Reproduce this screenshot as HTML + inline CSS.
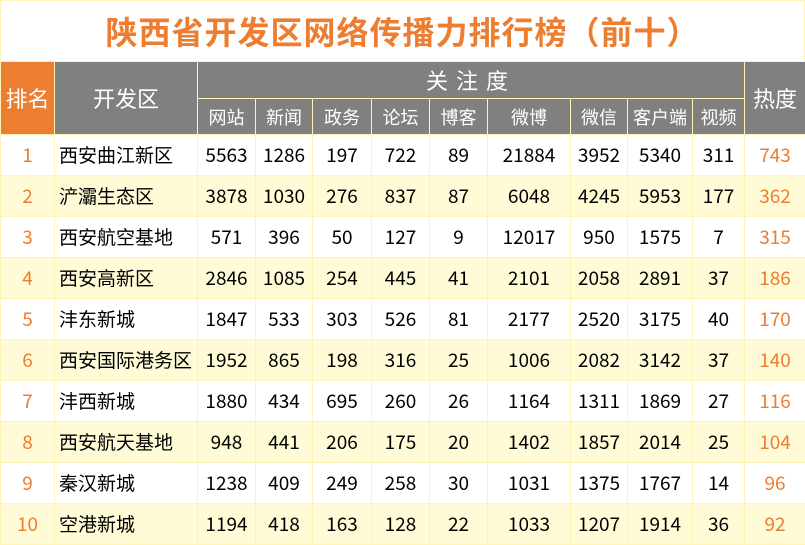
<!DOCTYPE html>
<html><head><meta charset="utf-8"><style>
body{margin:0;width:805px;height:545px;overflow:hidden;background:#fff;font-family:"Noto Sans CJK SC",sans-serif}
.t{position:absolute;left:0;top:0;width:803px;height:61px;border:1px solid #fff3b8;border-bottom:none;text-align:center;line-height:60px;font-size:32px;font-weight:bold;color:#ed7d31;letter-spacing:1px}
table{position:absolute;left:0;top:61px;border-collapse:collapse;table-layout:fixed;width:805px}
td{border:1px solid #fff3b8;text-align:center;padding:0;font-size:19px;color:#000;height:40px;line-height:22px}
.h td{background:#808080;color:#fff;font-size:18px;height:35px}
.h td.o{background:#ed7d31;font-size:22px}
.h td.big{font-size:22px}
tr.a td{background:#fffbd6}
td.r{color:#ed7d31}
td.n{text-align:left;padding-left:4px}
</style></head><body>
<div class="t">陕西省开发区网络传播力排行榜（前十）</div>
<table>
<colgroup><col style="width:54px"><col style="width:143px"><col style="width:58px"><col style="width:57px"><col style="width:59px"><col style="width:58px"><col style="width:58px"><col style="width:83px"><col style="width:57px"><col style="width:65px"><col style="width:52px"><col style="width:61px"></colgroup>
<tr class="h"><td rowspan="2" class="o">排名</td><td rowspan="2" class="big">开发区</td><td colspan="9" class="big" style="letter-spacing:8px;height:36px">关注度</td><td rowspan="2" class="big">热度</td></tr>
<tr class="h"><td>网站</td><td>新闻</td><td>政务</td><td>论坛</td><td>博客</td><td>微博</td><td>微信</td><td>客户端</td><td>视频</td></tr>
<tr><td class="r">1</td><td class="n">西安曲江新区</td><td>5563</td><td>1286</td><td>197</td><td>722</td><td>89</td><td>21884</td><td>3952</td><td>5340</td><td>311</td><td class="r">743</td></tr>
<tr class="a"><td class="r">2</td><td class="n">浐灞生态区</td><td>3878</td><td>1030</td><td>276</td><td>837</td><td>87</td><td>6048</td><td>4245</td><td>5953</td><td>177</td><td class="r">362</td></tr>
<tr><td class="r">3</td><td class="n">西安航空基地</td><td>571</td><td>396</td><td>50</td><td>127</td><td>9</td><td>12017</td><td>950</td><td>1575</td><td>7</td><td class="r">315</td></tr>
<tr class="a"><td class="r">4</td><td class="n">西安高新区</td><td>2846</td><td>1085</td><td>254</td><td>445</td><td>41</td><td>2101</td><td>2058</td><td>2891</td><td>37</td><td class="r">186</td></tr>
<tr><td class="r">5</td><td class="n">沣东新城</td><td>1847</td><td>533</td><td>303</td><td>526</td><td>81</td><td>2177</td><td>2520</td><td>3175</td><td>40</td><td class="r">170</td></tr>
<tr class="a"><td class="r">6</td><td class="n">西安国际港务区</td><td>1952</td><td>865</td><td>198</td><td>316</td><td>25</td><td>1006</td><td>2082</td><td>3142</td><td>37</td><td class="r">140</td></tr>
<tr><td class="r">7</td><td class="n">沣西新城</td><td>1880</td><td>434</td><td>695</td><td>260</td><td>26</td><td>1164</td><td>1311</td><td>1869</td><td>27</td><td class="r">116</td></tr>
<tr class="a"><td class="r">8</td><td class="n">西安航天基地</td><td>948</td><td>441</td><td>206</td><td>175</td><td>20</td><td>1402</td><td>1857</td><td>2014</td><td>25</td><td class="r">104</td></tr>
<tr><td class="r">9</td><td class="n">秦汉新城</td><td>1238</td><td>409</td><td>249</td><td>258</td><td>30</td><td>1031</td><td>1375</td><td>1767</td><td>14</td><td class="r">96</td></tr>
<tr class="a"><td class="r">10</td><td class="n">空港新城</td><td>1194</td><td>418</td><td>163</td><td>128</td><td>22</td><td>1033</td><td>1207</td><td>1914</td><td>36</td><td class="r">92</td></tr>
</table>
</body></html>
